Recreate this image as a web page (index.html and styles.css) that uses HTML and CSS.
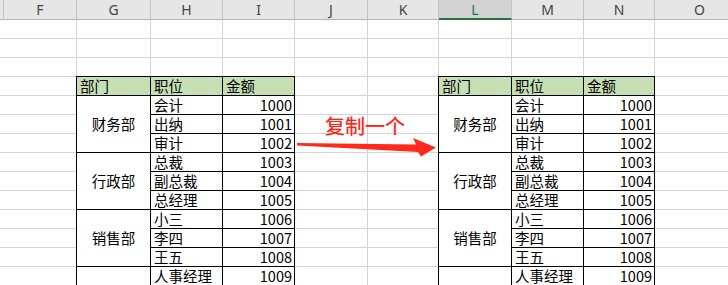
FILE: index.html
```html
<!DOCTYPE html>
<html lang="zh-CN">
<head>
    <meta charset="UTF-8">
    <meta name="viewport" content="width=device-width, initial-scale=1.0">
    <title>部门职位金额</title>
    <link rel="stylesheet" href="styles.css">
</head>
<body>
    <div class="sheet" id="sheet">
        <!-- cells are filled in by the script below -->
        <div class="label">复制一个</div>
        <svg class="arrow" width="142" height="22" viewBox="0 0 142 22">
            <polygon points="2,7 121,8.5 118,2 141,11.5 126,20.5 123,16 2,9.5" fill="#ff2a1c"/>
        </svg>
    </div>

    <script>
        document.addEventListener('DOMContentLoaded', () => {
            const sheet = document.getElementById('sheet');
            const letters = ['', 'F', 'G', 'H', 'I', 'J', 'K', 'L', 'M', 'N', 'O'];
            const rowCount = 14;
            const selectedCol = 'L';

            const depts = [
                { name: '财务部', jobs: ['会计', '出纳', '审计'] },
                { name: '行政部', jobs: ['总裁', '副总裁', '总经理'] },
                { name: '销售部', jobs: ['小三', '李四', '王五'] },
                { name: '人事部', jobs: ['人事经理'], hideName: true }
            ];

            function addCell(cls, row, col, text, rowSpan) {
                const el = document.createElement('div');
                el.className = cls;
                el.style.gridArea = `${row} / ${col} / span ${rowSpan || 1} / span 1`;
                if (text) el.textContent = text;
                sheet.insertBefore(el, sheet.querySelector('.label'));
                return el;
            }

            // column headers
            letters.forEach((letter, i) => {
                const cls = letter === selectedCol ? 'head selected' : 'head';
                addCell(cls, 1, i + 1, letter);
            });

            // empty grid
            for (let r = 2; r <= rowCount + 1; r++) {
                for (let c = 1; c <= letters.length; c++) {
                    addCell('cell', r, c);
                }
            }

            // the same table drawn twice: from column G and from column L
            function drawTable(startCol) {
                const top = 5;
                addCell('cell tb tb-top tb-left th', top, startCol, '部门');
                addCell('cell tb tb-top th', top, startCol + 1, '职位');
                addCell('cell tb tb-top th', top, startCol + 2, '金额');

                let row = top + 1;
                let amount = 1000;
                depts.forEach(dept => {
                    const span = dept.jobs.length;
                    addCell('cell tb tb-left dept', row, startCol, dept.hideName ? '' : dept.name, span);
                    dept.jobs.forEach(job => {
                        addCell('cell tb', row, startCol + 1, job);
                        addCell('cell tb num', row, startCol + 2, String(amount));
                        amount++;
                        row++;
                    });
                });
            }

            drawTable(3);
            drawTable(8);
        });
    </script>
</body>
</html>
```

FILE: styles.css
```css
/* Spreadsheet look */
body {
    margin: 0;
    background-color: #fff;
    overflow: hidden;
}
.sheet {
    position: relative;
    display: grid;
    grid-template-columns: 4px 73px 74px 72px 72px 73px 71px 73px 72px 71px 90px;
    grid-template-rows: 20px repeat(14, 19px);
    font-family: "Noto Sans CJK SC", "Noto Sans", sans-serif;
    font-size: 14.5px;
    color: #000;
}
.head {
    box-sizing: border-box;
    display: flex;
    align-items: center;
    justify-content: center;
    background-color: #e6e6e6;
    border-right: 1px solid #c4c4c4;
    border-bottom: 1px solid #b4b4b4;
    font-family: "Noto Sans", sans-serif;
    font-size: 14px;
    color: #444;
    padding-bottom: 1px;
}
.head.selected {
    background-color: #d2d2d2;
    border-bottom: 2px solid #217346;
    color: #217346;
    padding-bottom: 0;
}
.cell {
    box-sizing: border-box;
    display: flex;
    align-items: center;
    border-right: 1px solid #d4d4d4;
    border-bottom: 1px solid #d4d4d4;
    background-color: #fff;
    padding: 0 3px;
    line-height: 18px;
    white-space: nowrap;
}
/* table cells sit on top of the grid */
.tb {
    border-right-color: #000;
    border-bottom-color: #000;
}
.tb-top {
    margin-top: -1px;
    border-top: 1px solid #000;
}
.tb-left {
    margin-left: -1px;
    border-left: 1px solid #000;
}
.th {
    background-color: #c6e0b4;
}
.dept {
    justify-content: center;
}
.num {
    justify-content: flex-end;
    padding: 0 2px;
}
.label {
    position: absolute;
    left: 325px;
    top: 116px;
    font-size: 20px;
    line-height: 20px;
    color: #ff2018;
    text-shadow: 0 0 1px #ff9a90;
}
.arrow {
    position: absolute;
    left: 295px;
    top: 136px;
}
```
